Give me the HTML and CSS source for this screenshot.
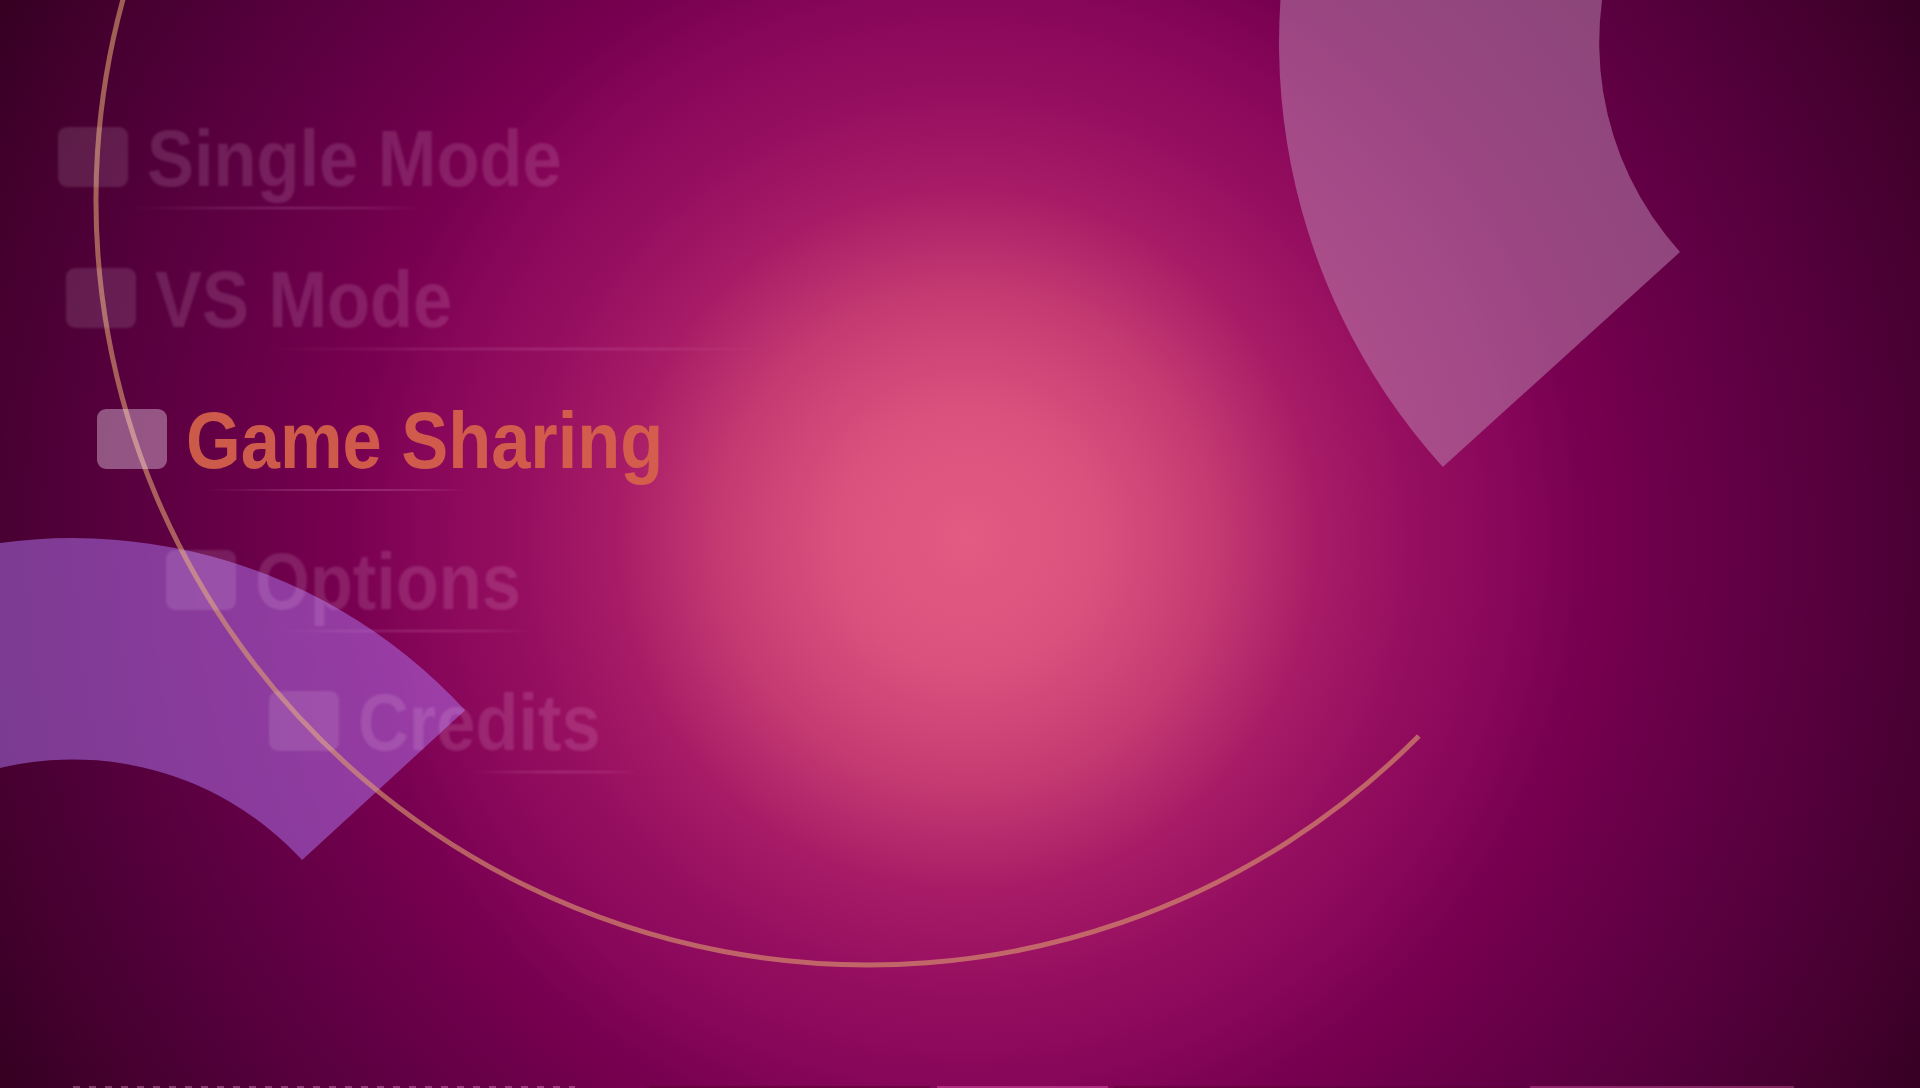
FILE: index.html
```html
<!DOCTYPE html>
<html lang="en">
<head>
<meta charset="utf-8">
<title>Game Sharing</title>
<link rel="stylesheet" href="styles.css">
</head>
<body>
<div class="screen">
  <svg class="deco" viewBox="0 0 1920 1088" width="1920" height="1088" aria-hidden="true">
    <path class="petal-top" d="M 1442.8 467 A 632 632 0 0 1 1911 -589.5 L 1911 -269.5 A 312 312 0 0 0 1680 252 Z"/>
    <path class="petal-bottom" d="M 465.1 710.3 A 533 533 0 0 0 -460.3 1071 L -238.9 1071 A 311.6 311.6 0 0 1 302.1 860.1 Z"/>
    <path class="ring" d="M 1418.8 736 A 772 765 0 1 1 868 -565"/>
  </svg>

  <nav class="menu">
    <div class="item item-single">
      <div class="row"><span class="box"></span><span class="label">Single Mode</span></div>
      <span class="rule"></span>
    </div>
    <div class="item item-vs">
      <div class="row"><span class="box"></span><span class="label">VS Mode</span></div>
      <span class="rule"></span>
    </div>
    <div class="item item-share selected">
      <div class="row"><span class="box"></span><span class="label">Game Sharing</span></div>
      <span class="rule"></span>
    </div>
    <div class="item item-options">
      <div class="row"><span class="box"></span><span class="label">Options</span></div>
      <span class="rule"></span>
    </div>
    <div class="item item-credits">
      <div class="row"><span class="box"></span><span class="label">Credits</span></div>
      <span class="rule"></span>
    </div>
  </nav>

  <div class="strip">
    <span class="seg seg-dots"></span>
    <span class="seg seg-a"></span>
    <span class="seg seg-b"></span>
    <span class="seg seg-c"></span>
    <span class="seg seg-d"></span>
  </div>
</div>
</body>
</html>
```

FILE: styles.css
```css
html, body {
  margin: 0;
  padding: 0;
  width: 1920px;
  height: 1088px;
  overflow: hidden;
  background: #3a0022;
}

.screen {
  position: relative;
  width: 1920px;
  height: 1088px;
  display: flex;
  flex-direction: column;
  background: radial-gradient(circle at 967px 539px,
    #e35b83 0px,
    #da517e 130px,
    #c63c72 240px,
    #a81c67 350px,
    #950e5f 450px,
    #88075a 540px,
    #780050 620px,
    #660047 740px,
    #56003d 860px,
    #470031 980px,
    #340020 1120px);
  font-family: "Liberation Sans", Arial, sans-serif;
}

.deco {
  position: absolute;
  left: 0;
  top: 0;
}

.petal-top {
  fill: rgba(190, 140, 180, 0.5);
}

.petal-bottom {
  fill: rgba(178, 118, 243, 0.5);
}

.ring {
  fill: none;
  stroke: rgba(222, 158, 112, 0.6);
  stroke-width: 5;
}

.menu {
  position: relative;
  z-index: 1;
  display: flex;
  flex-direction: column;
  gap: 51px;
  padding-top: 119px;
}

.item {
  display: flex;
  flex-direction: column;
  filter: blur(1.3px);
}

.row {
  display: flex;
  align-items: flex-start;
  gap: 19px;
  height: 80px;
}

.box {
  flex: none;
  width: 70px;
  height: 60px;
  margin-top: 8px;
  border-radius: 9px;
  background: rgba(255, 235, 255, 0.12);
}

.label {
  display: block;
  font-size: 80px;
  line-height: 80px;
  font-weight: 700;
  white-space: nowrap;
  color: rgba(255, 220, 245, 0.14);
  transform: scaleX(0.88);
  transform-origin: 0 50%;
}

.rule {
  display: block;
  height: 2px;
  margin-top: 8px;
  background: linear-gradient(to right,
    rgba(255, 190, 235, 0) 0%,
    rgba(255, 190, 235, 0.14) 30%,
    rgba(255, 190, 235, 0.2) 55%,
    rgba(255, 190, 235, 0.14) 80%,
    rgba(255, 190, 235, 0) 100%);
}

.selected {
  filter: none;
}

.selected .box {
  background: rgba(255, 235, 255, 0.36);
}

.selected .label {
  color: rgba(216, 100, 74, 0.9);
}

.item-single { margin-left: 58px; }
.item-single .rule { margin-left: 70px; width: 298px; }

.item-vs { margin-left: 66px; }
.item-vs .rule { margin-left: 197px; width: 508px; }

.item-share { margin-left: 97px; }
.item-share .rule { margin-left: 108px; width: 263px; }

.item-options { margin-left: 166px; }
.item-options .rule { margin-left: 106px; width: 263px; }

.item-credits { margin-left: 269px; }
.item-credits .rule { margin-left: 199px; width: 172px; }

.strip {
  margin-top: auto;
  height: 2px;
  display: flex;
  position: relative;
  z-index: 1;
}

.seg {
  display: block;
  height: 2px;
}

.seg-dots {
  margin-left: 73px;
  width: 502px;
  background: repeating-linear-gradient(to right,
    rgba(255, 170, 220, 0.35) 0px,
    rgba(255, 170, 220, 0.35) 7px,
    transparent 7px,
    transparent 16px);
}

.seg-a {
  margin-left: 74px;
  width: 281px;
  background: rgba(90, 0, 50, 0.5);
}

.seg-b {
  margin-left: 7px;
  width: 171px;
  background: rgba(255, 120, 200, 0.35);
}

.seg-c {
  margin-left: 6px;
  width: 410px;
  background: rgba(90, 0, 50, 0.45);
}

.seg-d {
  margin-left: 6px;
  width: 264px;
  background: rgba(255, 120, 200, 0.3);
}
```
